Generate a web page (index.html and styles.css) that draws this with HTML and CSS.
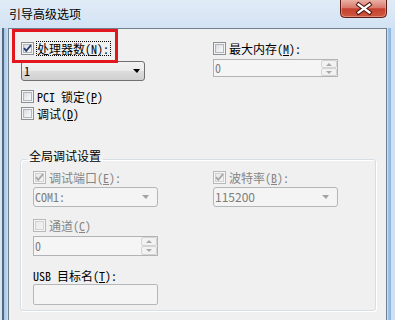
FILE: index.html
```html
<!DOCTYPE html>
<html lang="zh-CN">
<head>
<meta charset="utf-8">
<title>引导高级选项</title>
<link rel="stylesheet" href="styles.css">
</head>
<body>
<div class="window">
  <div class="titlebar">
    <span class="title">引导高级选项</span>
    <span class="close">
      <svg width="47" height="18" viewBox="0 0 47 18">
        <defs>
          <linearGradient id="cg" x1="0" y1="0" x2="0" y2="1">
            <stop offset="0" stop-color="#eab0a4"/>
            <stop offset="0.45" stop-color="#d8796a"/>
            <stop offset="0.5" stop-color="#c5412f"/>
            <stop offset="1" stop-color="#cf5a40"/>
          </linearGradient>
        </defs>
        <path d="M0.5 0 V13.5 Q0.5 17.5 4.5 17.5 H42.5 Q46.5 17.5 46.5 13.5 V0" fill="url(#cg)" stroke="#5a1e17"/>
        <path d="M1.5 0 V13 Q1.5 16.5 5 16.5 H42 Q45.5 16.5 45.5 13 V0" fill="none" stroke="#f0b8a8" stroke-opacity="0.5"/>
        <path d="M18.5 4.5 L29.5 12.5 M29.5 4.5 L18.5 12.5" stroke="#4a140d" stroke-width="4.2" stroke-linecap="square"/>
        <path d="M18.5 4.5 L29.5 12.5 M29.5 4.5 L18.5 12.5" stroke="#ffffff" stroke-width="2.2" stroke-linecap="square"/>
      </svg>
    </span>
  </div>
  <div class="client">
    <div class="top">
      <div class="col">
        <div class="check">
          <span class="cb"><svg class="tick" width="11" height="11" viewBox="0 0 11 11"><path d="M2 5.2 L4.2 7.8 L9 2.2" fill="none" stroke-width="1.8"/></svg></span>
          <span class="lbl focus">处理器数(<u>N</u>):</span>
        </div>
        <div class="combo combo-cpu"><span class="val">1</span><span class="arrow"></span></div>
        <div class="check check-pci"><span class="cb"></span><span class="lbl">PCI 锁定(<u>P</u>)</span></div>
        <div class="check check-dbg"><span class="cb"></span><span class="lbl">调试(<u>D</u>)</span></div>
      </div>
      <div class="col">
        <div class="check"><span class="cb"></span><span class="lbl">最大内存(<u>M</u>):</span></div>
        <div class="spin spin-mem">
          <span class="val">0</span>
          <span class="btns"><span class="sb"><i class="up"></i></span><span class="sb"><i class="dn"></i></span></span>
        </div>
      </div>
    </div>
    <fieldset class="group">
      <legend>全局调试设置</legend>
      <div class="gcols">
        <div class="col">
          <div class="check dis">
            <span class="cb"><svg class="tick" width="11" height="11" viewBox="0 0 11 11"><path d="M2 5.2 L4.2 7.8 L9 2.2" fill="none" stroke-width="1.8"/></svg></span>
            <span class="lbl">调试端口(<u>E</u>):</span>
          </div>
          <div class="combo dis combo-g"><span class="val">COM1:</span><span class="arrow"></span></div>
        </div>
        <div class="col">
          <div class="check dis">
            <span class="cb"><svg class="tick" width="11" height="11" viewBox="0 0 11 11"><path d="M2 5.2 L4.2 7.8 L9 2.2" fill="none" stroke-width="1.8"/></svg></span>
            <span class="lbl">波特率(<u>B</u>):</span>
          </div>
          <div class="combo dis combo-g"><span class="val num">115200</span><span class="arrow"></span></div>
        </div>
      </div>
      <div class="check dis check-chan"><span class="cb"></span><span class="lbl">通道(<u>C</u>)</span></div>
      <div class="spin spin-chan">
        <span class="val">0</span>
        <span class="btns"><span class="sb"><i class="up"></i></span><span class="sb"><i class="dn"></i></span></span>
      </div>
      <div class="usb-lbl">USB 目标名(<u>T</u>):</div>
      <div class="edit"></div>
    </fieldset>
  </div>
  <div class="mark"></div>
</div>
</body>
</html>
```
FILE: styles.css
```css
* { box-sizing: border-box; }
html, body { margin: 0; padding: 0; }
body {
  width: 395px;
  height: 320px;
  overflow: hidden;
  font-family: "Noto Sans CJK SC", "Noto Sans", sans-serif;
  font-size: 12px;
  font-feature-settings: "hwid" 1;
  color: #000;
  background: #cfe0f2;
}
.window {
  position: relative;
  width: 395px;
  height: 320px;
  display: flex;
  flex-direction: column;
  background: linear-gradient(to right,
    #d6e4f3 0, #d6e4f3 2px,
    #56687f 2px, #56687f 4px,
    #a6c5e5 4px, #bed6ee 7px,
    #c9dcf0 7px, #c9dcf0 388px,
    #9fc2e6 388px, #8fb6e0 391px,
    #cfe0f2 391px, #cfe0f2 395px);
}
.titlebar {
  height: 28px;
  flex: none;
  display: flex;
  align-items: flex-start;
  background: linear-gradient(#e0ebf7, #d3e3f4);
}
.title {
  padding: 7px 0 0 9px;
  line-height: 14px;
  font-size: 12px;
  color: #000;
}
.close {
  margin-left: auto;
  margin-right: 8px;
  width: 47px;
  height: 18px;
  display: block;
}
.close svg { display: block; }

.client {
  flex: 1;
  margin: 0 8px;
  border: 1px solid #6f8091;
  border-bottom: none;
  background: #f0f0f0;
  padding: 0;
}

.top {
  display: grid;
  grid-template-columns: 192px 1fr;
  padding: 13px 0 0 12px;
}
.col { display: flex; flex-direction: column; align-items: flex-start; }

.check {
  display: flex;
  align-items: center;
  height: 13px;
  gap: 3px;
}
.lbl { line-height: 13px; white-space: nowrap; }
.focus { outline: 1px dotted #000; padding-right: 1px; }

.cb {
  width: 13px;
  height: 13px;
  flex: none;
  border: 1px solid #8e8f8f;
  background: linear-gradient(135deg, #cfd3d8 0%, #eceef0 55%, #fdfdfd 100%);
  box-shadow: inset 0 0 0 1px #f4f4f4, inset 0 0 0 2px #b2b6bc;
  display: flex;
  align-items: center;
  justify-content: center;
}
.tick { display: block; }
.tick path { stroke: #283c72; }

.check.dis .lbl { color: #858585; }
.check.dis .cb {
  border-color: #b8b8b8;
  background: linear-gradient(135deg, #e6e6e6, #f6f6f6);
  box-shadow: inset 0 0 0 1px #f6f6f6, inset 0 0 0 2px #d2d2d2;
}
.check.dis .tick path { stroke: #a8a8a8; }

.check-pci { margin-top: 9px; }
.check-dbg { margin-top: 4px; }
.check-chan { margin-top: 12px; }

.combo {
  display: flex;
  align-items: center;
  height: 20px;
  width: 125px;
  border: 1px solid #707070;
  border-radius: 3px;
  background: linear-gradient(#f2f2f2 0, #ebebeb 50%, #dddddd 50%, #cfcfcf 100%);
  padding-left: 2px;
}
.combo-cpu { width: 124px; margin-top: 6px; }
.combo-g { margin-top: 3px; }
.combo .val { flex: 1; line-height: 14px; }
.arrow {
  width: 0;
  height: 0;
  border-left: 4px solid transparent;
  border-right: 3px solid transparent;
  border-top: 4px solid #000;
  margin-right: 4px;
}
.combo.dis {
  border-color: #b3b7ba;
  background: #f4f4f4;
  color: #7d7d7d;
  padding-left: 1px;
}
.combo.dis .arrow { border-top-color: #a3a3a3; margin-right: 8px; }
.num { font-feature-settings: normal; }

.spin {
  display: flex;
  width: 125px;
  border: 1px solid #b0b4b7;
  background: #f5f5f5;
  color: #7d7d7d;
  padding-left: 1px;
}
.spin-mem { height: 18px; margin-top: 4px; }
.spin-chan { height: 20px; margin-top: 4px; }
.spin .val { flex: 1; line-height: 14px; align-self: center; }
.btns {
  width: 16px;
  display: flex;
  flex-direction: column;
}
.sb {
  flex: 1;
  border: 1px solid #d4d4d4;
  border-radius: 2px;
  background: #f2f2f2;
  display: flex;
  align-items: center;
  justify-content: center;
}
.sb i {
  display: block;
  width: 0;
  height: 0;
  border-left: 3px solid transparent;
  border-right: 3px solid transparent;
}
.sb i.up { border-bottom: 3px solid #a8a8a8; }
.sb i.dn { border-top: 3px solid #a8a8a8; }

.group {
  margin: 29px 0 0 11px;
  width: 356px;
  min-width: 0;
  padding: 0 12px 5px 12px;
  border: 1px solid #d5dfe5;
  border-radius: 3px;
  box-shadow: inset 1px 1px 0 #fff, 1px 1px 0 #fff;
}
.group legend {
  margin-left: -6px;
  padding: 0 2px 6px 2px;
  line-height: 14px;
  font-size: 12px;
}
.gcols {
  display: grid;
  grid-template-columns: 180px 1fr;
  margin-top: 2px;
}
.usb-lbl {
  margin-top: 13px;
  height: 13px;
  line-height: 13px;
  white-space: nowrap;
}
.edit {
  margin-top: 2px;
  width: 125px;
  height: 21px;
  border: 1px solid #b5b8ba;
  border-radius: 2px;
  background: #f4f4f4;
}

.mark {
  position: absolute;
  left: 12px;
  top: 29px;
  width: 106px;
  height: 34px;
  border: 3px solid #e3161e;
}
```
